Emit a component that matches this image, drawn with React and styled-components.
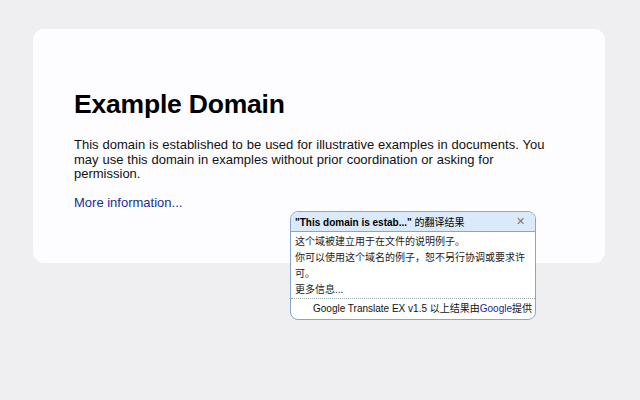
import React from "react";
import styled, { createGlobalStyle } from "styled-components";

const Global = createGlobalStyle`
  html, body { margin: 0; padding: 0; }
  body {
    background: #efeff1;
    font-family: "Liberation Sans", Arial, Helvetica, sans-serif;
    width: 640px;
    height: 400px;
    overflow: hidden;
  }
`;

const Page = styled.div`
  position: relative;
  width: 640px;
  height: 400px;
  padding: 29px 35px 0 33px;
  box-sizing: border-box;
`;

const Card = styled.div`
  width: 572px;
  height: 234px;
  box-sizing: border-box;
  background: #fdfdff;
  border-radius: 11px;
  padding: 60px 46px 0 41px;
`;

const Title = styled.h1`
  margin: 0 0 19px;
  font-size: 26.5px;
  line-height: 30px;
  font-weight: bold;
  color: #000;
  letter-spacing: -0.2px;
`;

const Para = styled.p`
  margin: 0 0 11px;
  font-size: 13px;
  line-height: 14.5px;
  color: #111;
  word-spacing: 0.3px;
`;

const Link = styled.a`
  color: #202f8e;
  text-decoration: none;
  font-size: 13px;
`;

const Popup = styled.div`
  position: absolute;
  left: 290px;
  top: 211px;
  width: 246px;
  box-sizing: border-box;
  border: 1px solid #86a6cc;
  border-radius: 8px;
  background: #fff;
  overflow: hidden;
  font-size: 10px;
  font-family: "Liberation Sans", Arial, "Noto Sans CJK SC", sans-serif;
`;

const Header = styled.div`
  display: flex;
  align-items: center;
  justify-content: space-between;
  height: 19px;
  padding: 0 10px 0 4px;
  background: #dbeafb;
  border-bottom: 1px solid #86a6cc;
  color: #000;
`;

const HeaderTitle = styled.span`
  font-weight: bold;
  font-size: 10px;
`;

const HeaderSuffix = styled.span`
  font-weight: normal;
`;

const Close = styled.span`
  color: #777;
  font-size: 11px;
  line-height: 1;
`;

const Body = styled.div`
  padding: 2px 4px 0;
  color: #222;
  line-height: 16px;
`;

const Line = styled.div``;

const Footer = styled.div`
  border-top: 1px dotted #9aa;
  padding: 3px 3px 3px;
  text-align: right;
  color: #111;
  line-height: 14px;
`;

const FooterLink = styled.a`
  color: #1a2a8f;
  text-decoration: none;
`;

export default function App() {
  return (
    <>
      <Global />
      <Page>
        <Card>
          <Title>Example Domain</Title>
          <Para>
            This domain is established to be used for illustrative examples in
            documents. You may use this domain in examples without prior
            coordination or asking for permission.
          </Para>
          <Link href="#">More information...</Link>
        </Card>
        <Popup>
          <Header>
            <HeaderTitle>
              "This domain is estab..." <HeaderSuffix>的翻译结果</HeaderSuffix>
            </HeaderTitle>
            <Close>✕</Close>
          </Header>
          <Body>
            <Line>这个域被建立用于在文件的说明例子。</Line>
            <Line>你可以使用这个域名的例子，恕不另行协调或要求许可。</Line>
            <Line>更多信息...</Line>
          </Body>
          <Footer>
            Google Translate EX v1.5 以上结果由<FooterLink href="#">Google</FooterLink>提供
          </Footer>
        </Popup>
      </Page>
    </>
  );
}
